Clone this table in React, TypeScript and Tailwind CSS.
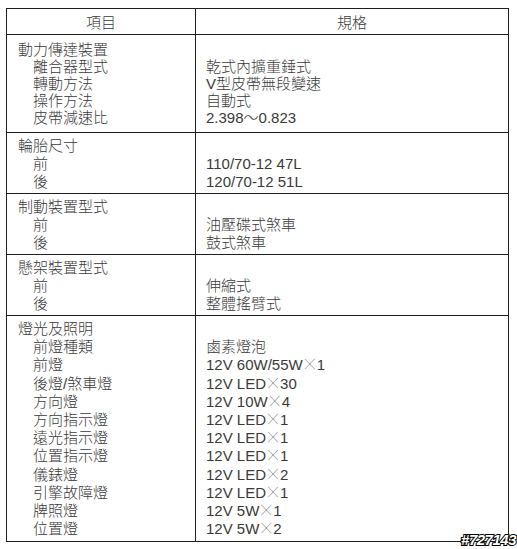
import React from "react";

type Section = {
  title: string;
  items: [string, string][];
  h: string;
  lead: string;
  pt: string;
};

const sections: Section[] = [
  {
    title: "動力傳達裝置",
    items: [
      ["離合器型式", "乾式內擴重錘式"],
      ["轉動方法", "V型皮帶無段變速"],
      ["操作方法", "自動式"],
      ["皮帶減速比", "2.398〜0.823"],
    ],
    h: "h-[98px]",
    lead: "leading-[17px]",
    pt: "pt-[6px]",
  },
  {
    title: "輪胎尺寸",
    items: [
      ["前", "110/70-12 47L"],
      ["後", "120/70-12 51L"],
    ],
    h: "h-[61px]",
    lead: "leading-[18px]",
    pt: "pt-[4px]",
  },
  {
    title: "制動裝置型式",
    items: [
      ["前", "油壓碟式煞車"],
      ["後", "鼓式煞車"],
    ],
    h: "h-[61px]",
    lead: "leading-[18px]",
    pt: "pt-[4px]",
  },
  {
    title: "懸架裝置型式",
    items: [
      ["前", "伸縮式"],
      ["後", "整體搖臂式"],
    ],
    h: "h-[61px]",
    lead: "leading-[18px]",
    pt: "pt-[4px]",
  },
  {
    title: "燈光及照明",
    items: [
      ["前燈種類", "鹵素燈泡"],
      ["前燈", "12V 60W/55W×1"],
      ["後燈/煞車燈", "12V LED×30"],
      ["方向燈", "12V 10W×4"],
      ["方向指示燈", "12V LED×1"],
      ["遠光指示燈", "12V LED×1"],
      ["位置指示燈", "12V LED×1"],
      ["儀錶燈", "12V LED×2"],
      ["引擎故障燈", "12V LED×1"],
      ["牌照燈", "12V 5W×1"],
      ["位置燈", "12V 5W×2"],
    ],
    h: "h-[226px]",
    lead: "leading-[18.2px]",
    pt: "pt-[4px]",
  },
];

function Value({ v }: { v: string }) {
  const parts = v.split("×");
  if (parts.length === 1) return <>{v}</>;
  return (
    <>
      {parts[0]}
      <span
        className="mx-[2px] text-[10px] leading-[10px] align-[2px] text-[#444]"
        style={{ fontFamily: '"Noto Sans CJK TC", sans-serif' }}
      >
        ╳
      </span>
      {parts[1]}
    </>
  );
}

export default function App() {
  return (
    <div
      className="relative w-[517px] h-[549px] bg-white text-[#3a3a3a] text-[15px] font-light"
      style={{ fontFamily: '"Liberation Sans", "Noto Sans CJK TC", sans-serif' }}
    >
      <div className="absolute left-0 top-0 pl-[6px] pt-[8px]">
        <div className="w-[503px] border border-[#1e1e1e]">
          <div className="flex h-[25px]">
            <div className="w-[189px] border-r border-[#1e1e1e] flex items-center justify-center pt-[3px]">
              項目
            </div>
            <div className="flex-1 flex items-center justify-center pt-[3px]">規格</div>
          </div>
          {sections.map((s) => (
            <div key={s.title} className={`flex border-t border-[#1e1e1e] ${s.h}`}>
              <div className={`w-[189px] border-r border-[#1e1e1e] pl-[11px] ${s.pt} ${s.lead}`}>
                <div>{s.title}</div>
                {s.items.map(([k]) => (
                  <div key={k} className="pl-[15px]">
                    {k}
                  </div>
                ))}
              </div>
              <div className={`flex-1 pl-[10px] ${s.pt} ${s.lead}`}>
                <div>&nbsp;</div>
                {s.items.map(([k, v]) => (
                  <div key={k}>
                    <Value v={v} />
                  </div>
                ))}
              </div>
            </div>
          ))}
        </div>
      </div>
      <div
        className="absolute right-[1px] top-[532px] text-[15px] font-bold italic text-white tracking-[-0.5px] [-webkit-text-stroke:2px_#000] [paint-order:stroke_fill] leading-[16px]"
        style={{ fontFamily: '"Liberation Sans", sans-serif' }}
      >
        #727143
      </div>
    </div>
  );
}
